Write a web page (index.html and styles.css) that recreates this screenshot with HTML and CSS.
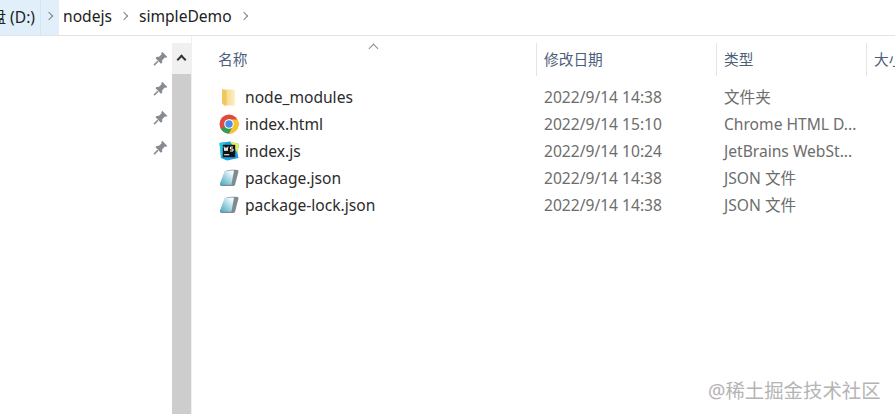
FILE: index.html
```html
<!DOCTYPE html>
<html lang="zh-CN">

<head>
  <meta charset="UTF-8">
  <title>simpleDemo</title>
  <link rel="stylesheet" href="styles.css">
</head>

<body>
  <svg class="defs" width="0" height="0">
    <defs>
      <linearGradient id="note" x1="0" y1="1" x2="1" y2="0">
        <stop offset="0" stop-color="#4aa3bf"/>
        <stop offset=".5" stop-color="#a6d8e4"/>
        <stop offset=".85" stop-color="#f6fbfc"/>
      </linearGradient>
      <linearGradient id="fold" x1="0" y1="0" x2="1" y2="0">
        <stop offset="0" stop-color="#f2cf75"/>
        <stop offset="1" stop-color="#fdf0c2"/>
      </linearGradient>
    </defs>
    <symbol id="pin" viewBox="0 0 14 14">
      <path d="M8.6 .8 13.4 5.6 12.2 6.4 11 6 8.6 8.6 8.6 11 7.4 11.8 2.4 6.8 3.2 5.6 5.6 5.4 8 3 7.8 1.8Z" fill="#858b91"/>
      <path d="M4.6 9.6 1 13.2" stroke="#858b91" stroke-width="1.5"/>
    </symbol>
    <symbol id="json" viewBox="0 0 20 20">
      <path d="M6 3.2C9 2 14 1.6 18.6 2L19.6 3 16 17 14.8 18H2.5C1.4 18 .8 17 1.2 16Z" fill="#7f8a91"/>
      <path d="M5.6 3.4C9 2.4 12 2.2 15 2.6L12.4 16.8 1.4 16.8C.8 16.8 .7 16.2 .9 15.8Z" fill="url(#note)"/>
    </symbol>
  </svg>

  <header class="crumbs">
    <div class="crumb crumb-drive">盘 (D:)</div>
    <div class="crumb-sep crumb-sep-active"><span class="chev"></span></div>
    <div class="crumb">nodejs</div>
    <div class="crumb-sep"><span class="chev"></span></div>
    <div class="crumb">simpleDemo</div>
    <div class="crumb-sep"><span class="chev"></span></div>
  </header>

  <main class="explorer">
    <aside class="pins">
      <svg class="pin"><use href="#pin"/></svg>
      <svg class="pin"><use href="#pin"/></svg>
      <svg class="pin"><use href="#pin"/></svg>
      <svg class="pin"><use href="#pin"/></svg>
    </aside>

    <div class="scrollbar">
      <div class="scroll-btn"><span class="scroll-up"></span></div>
      <div class="scroll-thumb"></div>
    </div>

    <section class="files">
      <div class="row head">
        <div class="col col-name">名称</div>
        <div class="col col-date">修改日期</div>
        <div class="col col-type">类型</div>
        <div class="col col-size">大小</div>
        <span class="sort-arrow"></span>
      </div>

      <div class="list">
        <div class="row">
          <div class="col col-name">
            <svg class="icon" viewBox="0 0 20 20">
              <path d="M3 2.5H14.5L16 4V18.5H5.5L3 16Z" fill="url(#fold)"/>
              <path d="M3 2.5H5.5L7.5 4.5V18.5H5.5L3 16Z" fill="#efc65f"/>
            </svg>
            node_modules
          </div>
          <div class="col col-date">2022/9/14 14:38</div>
          <div class="col col-type">文件夹</div>
        </div>
        <div class="row">
          <div class="col col-name">
            <svg class="icon" viewBox="0 0 20 20">
              <circle cx="10" cy="10" r="9.5" fill="#de4b3e"/>
              <path d="M10 10 1.8 14.8A9.5 9.5 0 0 0 10 19.5L14.5 11Z" fill="#2f9e4f"/>
              <path d="M10 5.5H18.7A9.5 9.5 0 0 1 10 19.5L14.5 11Z" fill="#f6c42d"/>
              <circle cx="10" cy="10" r="4.8" fill="#fff"/>
              <circle cx="10" cy="10" r="3.7" fill="#4a8cec"/>
            </svg>
            index.html
          </div>
          <div class="col col-date">2022/9/14 15:10</div>
          <div class="col col-type">Chrome HTML D...</div>
        </div>
        <div class="row">
          <div class="col col-name">
            <svg class="icon" viewBox="0 0 20 20">
              <path d="M.5 2 11 .5 20 3 18.5 12 19.5 17 8 19.5 2 17Z" fill="#1e9fe0"/>
              <path d="M11 .5 20 3 18.5 12Z" fill="#e4f25a"/>
              <path d="M.5 2 6 1 4 12 2 17Z" fill="#27c6e8"/>
              <rect x="3.8" y="3.8" width="12.4" height="12.4" fill="#111"/>
              <rect x="5.2" y="13.2" width="5" height="1.1" fill="#fff"/>
              <path d="M5 5.5 6 10 7 6.5 8 10 9 5.5M14 6H11.5V8H14V10H11" fill="none" stroke="#fff" stroke-width="1"/>
            </svg>
            index.js
          </div>
          <div class="col col-date">2022/9/14 10:24</div>
          <div class="col col-type">JetBrains WebSt...</div>
        </div>
        <div class="row">
          <div class="col col-name">
            <svg class="icon"><use href="#json"/></svg>
            package.json
          </div>
          <div class="col col-date">2022/9/14 14:38</div>
          <div class="col col-type">JSON 文件</div>
        </div>
        <div class="row">
          <div class="col col-name">
            <svg class="icon"><use href="#json"/></svg>
            package-lock.json
          </div>
          <div class="col col-date">2022/9/14 14:38</div>
          <div class="col col-type">JSON 文件</div>
        </div>
      </div>
    </section>
  </main>

  <div class="watermark">@稀土掘金技术社区</div>
</body>

</html>
```

FILE: styles.css
```css
* {
  margin: 0;
  padding: 0;
  box-sizing: border-box;
}

html,
body {
  height: 100%;
  overflow: hidden;
}

body {
  width: 895px;
  height: 414px;
  background: #fff;
  color: #2b2b2b;
  font-family: "Noto Sans", "Noto Sans CJK SC", sans-serif;
  font-size: 15.6px;
  display: flex;
  flex-direction: column;
}

.defs {
  position: absolute;
}

/* Barra de endereco */
.crumbs {
  height: 36px;
  display: flex;
  align-items: stretch;
  border-bottom: 1.5px solid #e2e3e4;
  flex-shrink: 0;
}

.crumb {
  display: flex;
  align-items: center;
  padding-bottom: 3px;
  font-size: 15.6px;
  color: #222;
}

.crumb-drive {
  width: 41px;
  justify-content: flex-end;
  padding-right: 5px;
  background: #e1effa;
  border-right: 1px solid #d2e4f3;
  white-space: nowrap;
  overflow: hidden;
}

.crumb-sep {
  width: 18px;
  display: flex;
  align-items: center;
  justify-content: center;
  padding-bottom: 4px;
}

.crumb-sep-active {
  background: #e1effa;
  margin-right: 4px;
}

.crumb-sep:not(.crumb-sep-active) {
  width: 27px;
}

.chev {
  width: 6px;
  height: 6px;
  margin-left: -2px;
  border-top: 1.5px solid #808080;
  border-right: 1.5px solid #808080;
  transform: rotate(45deg);
}

/* Painel principal */
.explorer {
  flex: 1;
  display: flex;
  min-height: 0;
}

.pins {
  width: 172px;
  padding: 15px 4px 0 0;
  display: flex;
  flex-direction: column;
  align-items: flex-end;
  gap: 14.6px;
}

.pin {
  width: 15px;
  height: 15px;
}

.scrollbar {
  width: 20px;
  padding-top: 7px;
  display: flex;
  flex-direction: column;
  border-right: 1px solid #f0f0f0;
}

.scroll-btn {
  height: 31px;
  background: #f0f0f0;
  display: flex;
  align-items: center;
  justify-content: center;
}

.scroll-up {
  width: 7px;
  height: 7px;
  margin-top: 1px;
  border-top: 2px solid #333;
  border-left: 2px solid #333;
  transform: rotate(45deg);
}

.scroll-thumb {
  flex: 1;
  background: #cdcdcd;
}

.files {
  flex: 1;
  min-width: 0;
  padding-top: 7px;
  overflow: hidden;
}

.row {
  display: flex;
  align-items: center;
  height: 27px;
}

.head {
  position: relative;
  height: 33px;
  margin-bottom: 7px;
  color: #4c607a;
  font-size: 14.7px;
}

.col {
  flex-shrink: 0;
  white-space: nowrap;
  padding-left: 7px;
}

.col-name {
  width: 345px;
  padding-left: 27px;
  display: flex;
  align-items: center;
  gap: 6px;
}

.col-date {
  width: 180px;
}

.col-type {
  width: 150px;
}

.col-size {
  width: 40px;
}

.head .col {
  height: 100%;
  padding-bottom: 3px;
  display: flex;
  align-items: center;
  border-right: 1px solid #e5e5e5;
}

.head .col-name {
  padding-left: 26px;
}

.head .col-size {
  border-right: 0;
}

.list .col-date,
.list .col-type {
  color: #6d6d6d;
}

.sort-arrow {
  position: absolute;
  left: 178px;
  top: 2px;
  width: 7px;
  height: 7px;
  border-top: 1px solid #8a8a8a;
  border-left: 1px solid #8a8a8a;
  transform: rotate(45deg);
}

.icon {
  width: 20px;
  height: 20px;
  flex-shrink: 0;
}

.watermark {
  position: absolute;
  left: 708px;
  top: 375px;
  font-size: 19.4px;
  color: #b4b4b4;
  white-space: nowrap;
}
```
